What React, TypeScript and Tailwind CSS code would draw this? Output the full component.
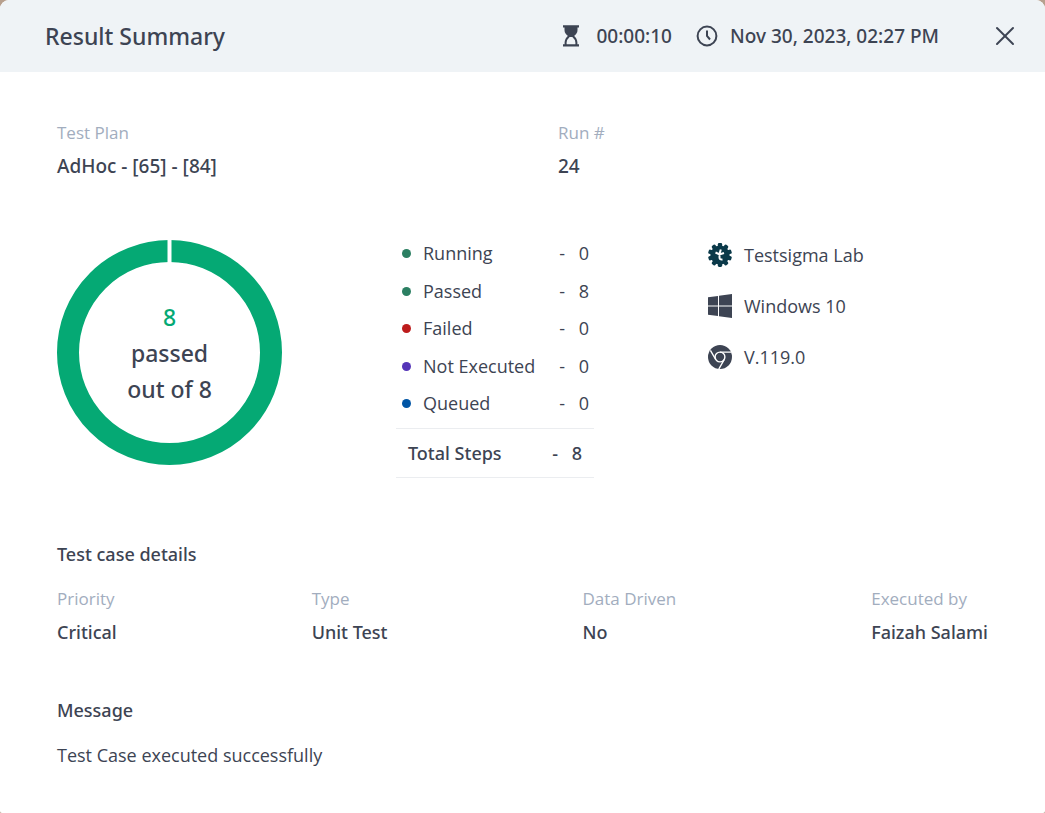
import { X } from "lucide-react";

const counts = [
  { label: "Running", value: 0, dot: "bg-[#2b7f62]" },
  { label: "Passed", value: 8, dot: "bg-[#2b7f62]" },
  { label: "Failed", value: 0, dot: "bg-[#bd1c1c]" },
  { label: "Not Executed", value: 0, dot: "bg-[#5535b8]" },
  { label: "Queued", value: 0, dot: "bg-[#0055a5]" },
];

const details = [
  { label: "Priority", value: "Critical" },
  { label: "Type", value: "Unit Test" },
  { label: "Data Driven", value: "No" },
  { label: "Executed by", value: "Faizah Salami" },
];

function HourglassIcon() {
  return (
    <svg width="18" height="22" viewBox="0 0 18 22" fill="none" aria-hidden="true">
      <path d="M1 1.3h16M1 20.4h16" stroke="#3d4453" strokeWidth="2.2" />
      <path d="M2.500 1h13v4c0 3-1.500 4.600-3.800 6.200H6.300C4 9.600 2.500 8 2.500 5z" fill="#3d4453" />
      <path
        d="M3.600 20v-2.500c0-3 1.600-4.700 3.600-6.500h3.600c2 1.800 3.600 3.500 3.600 6.500V20"
        stroke="#3d4453"
        strokeWidth="2"
      />
    </svg>
  );
}

function ClockIcon() {
  return (
    <svg width="22" height="22" viewBox="0 0 22 22" fill="none" stroke="#3d4453" strokeWidth="2" aria-hidden="true">
      <circle cx="11" cy="11" r="9.400" />
      <path d="M11 5.500V11l3 3.500" />
    </svg>
  );
}

function LabIcon() {
  return (
    <svg width="24" height="24" viewBox="0 0 24 24" aria-hidden="true">
      <g fill="#0b3a4a">
        <circle cx="12" cy="12" r="9.600" />
        {[0, 36, 72, 108, 144, 180, 216, 252, 288, 324].map((deg) => (
          <rect key={deg} x="9.800" y="0" width="4.400" height="5" rx="1.400" transform={`rotate(${deg} 12 12)`} />
        ))}
      </g>
      <path
        d="M12.800 6.500 11.500 11v3.500c0 1.700 1 2.300 3 2M7.500 9.500l4 2 4.500-1.500"
        fill="none"
        stroke="#fff"
        strokeWidth="2"
      />
    </svg>
  );
}

function WindowsIcon() {
  return (
    <svg width="24" height="24" viewBox="0 0 24 24" fill="#3d4453" aria-hidden="true">
      <path d="M0 3.300 10 1.900v9.600H0zM11 1.800 24 0v11.500H11zM0 12.500h10v9.600L0 20.700zM11 12.500h13V24l-13-1.800z" />
    </svg>
  );
}

function ChromeIcon() {
  return (
    <svg width="24" height="24" viewBox="0 0 24 24" aria-hidden="true">
      <circle cx="12" cy="12" r="12" fill="#3d4453" />
      <g fill="none" stroke="#fff" strokeWidth="1.400">
        <circle cx="12" cy="12" r="4.900" />
        <path d="M12 7.100h11M7.700 14.500 2.400 5.300M16.300 14.500 10.800 24" />
      </g>
    </svg>
  );
}

// single full segment with a hairline gap at the top
function PassedDonut() {
  return (
    <div className="relative size-[225px] shrink-0">
      <svg viewBox="0 0 225 225" className="size-full" aria-hidden="true">
        <circle cx="112.500" cy="112.500" r="101.500" fill="none" stroke="#05a974" strokeWidth="22" />
        <path d="M112.500 0v24" stroke="#fff" strokeWidth="4" />
      </svg>
      <div className="absolute inset-0 flex flex-col items-center justify-center font-['Noto_Sans',sans-serif] text-[23px] leading-9 font-medium">
        <span className="text-[#05a974]">8</span>
        <span>passed</span>
        <span>out of 8</span>
      </div>
    </div>
  );
}

function Field({ label, value }: { label: string; value: string }) {
  return (
    <div>
      <dt className="text-[17px] leading-6 text-[#a2adbe]">{label}</dt>
      <dd className="mt-[7px] font-['Noto_Sans',sans-serif] leading-7 font-medium">{value}</dd>
    </div>
  );
}

export default function App() {
  return (
    <div className="min-h-screen bg-[#b7a08e]">
      <main className="min-h-screen rounded-t-[9px] rounded-b-[2px] bg-white font-['Open_Sans','Noto_Sans',sans-serif] text-[18px] text-[#3d4453]">
        <header className="flex h-[72px] items-center rounded-t-[9px] bg-[#eff3f6] pr-6 pl-[45px] font-['Noto_Sans',sans-serif] font-medium">
          <h1 className="text-[23px] leading-8">Result Summary</h1>
          <div className="ml-auto flex items-center text-[19px]">
            <HourglassIcon />
            <span className="ml-4">00:00:10</span>
            <span className="ml-6 flex items-center gap-3">
              <ClockIcon />
              Nov 30, 2023, 02:27 PM
            </span>
          </div>
          <button type="button" aria-label="Close" className="ml-[50px]">
            <X size={32} strokeWidth={1.5} />
          </button>
        </header>

        <div className="px-[57px] pt-[49px] pb-10">
          <dl className="flex text-[19px]">
            <div className="w-[501px]">
              <Field label="Test Plan" value="AdHoc - [65] - [84]" />
            </div>
            <Field label="Run #" value="24" />
          </dl>

          <section className="mt-[60px] flex items-start">
            <PassedDonut />

            <div className="ml-[114px] w-[198px]">
              <ul className="mb-[11px] flex h-[177px] flex-col justify-between pr-[5px] pl-[6px] leading-[27px]">
                {counts.map((c) => (
                  <li key={c.label} className="flex items-center">
                    <span className={`mr-3 size-[9px] rounded-full ${c.dot}`} />
                    <span>{c.label}</span>
                    <span className="ml-auto">-</span>
                    <span className="w-6 text-right">{c.value}</span>
                  </li>
                ))}
              </ul>
              <div className="flex h-[50px] items-center border-y border-[#ebedf0] px-3 font-['Noto_Sans',sans-serif] font-medium">
                <span>Total Steps</span>
                <span className="ml-auto">-</span>
                <span className="w-6 text-right">8</span>
              </div>
            </div>

            <ul className="mt-[3px] ml-[114px] flex flex-col gap-[27px]">
              <li className="flex h-6 items-center gap-3">
                <LabIcon />
                Testsigma Lab
              </li>
              <li className="flex h-6 items-center gap-3">
                <WindowsIcon />
                Windows 10
              </li>
              <li className="flex h-6 items-center gap-3">
                <ChromeIcon />
                V.119.0
              </li>
            </ul>
          </section>

          <section className="mt-[62px]">
            <h2 className="font-['Noto_Sans',sans-serif] leading-7 font-medium">Test case details</h2>
            <dl className="mt-[19px] flex justify-between">
              {details.map((d) => (
                <Field key={d.label} label={d.label} value={d.value} />
              ))}
            </dl>
          </section>

          <section className="mt-[50px]">
            <h2 className="font-['Noto_Sans',sans-serif] leading-7 font-medium">Message</h2>
            <p className="mt-[17px] leading-7">Test Case executed successfully</p>
          </section>
        </div>
      </main>
    </div>
  );
}
